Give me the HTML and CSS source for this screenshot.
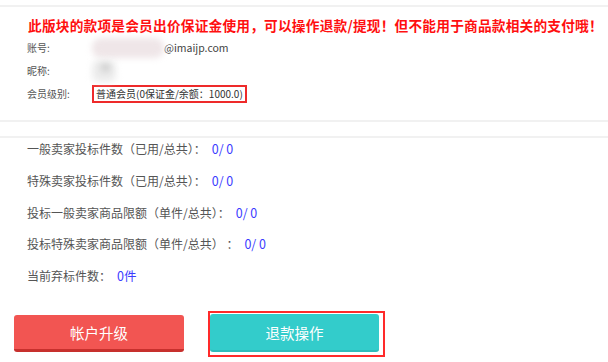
FILE: index.html
```html
<!DOCTYPE html>
<html lang="zh-CN">
<head>
<meta charset="utf-8">
<link rel="stylesheet" href="styles.css">
</head>
<body>
<div class="page">
  <div class="topline"></div>
  <p class="notice">此版块的款项是会员出价保证金使用，可以操作退款/提现！但不能用于商品款相关的支付哦！</p>
  <div class="info">
    <div class="info-row">
      <span class="label">账号:</span>
      <span class="value"><span class="blur blur-account"></span>@imaijp.com</span>
    </div>
    <div class="info-row">
      <span class="label">昵称:</span>
      <span class="value"><span class="blur blur-nick"><span class="blur-dark"></span></span></span>
    </div>
    <div class="info-row">
      <span class="label">会员级别:</span>
      <span class="value"><span class="level">普通会员(0保证金/余额：1000.0)</span></span>
    </div>
  </div>
  <div class="divider"></div>
  <div class="stats">
    <div class="stat">一般卖家投标件数（已用/总共）：<span class="num">0/ 0</span></div>
    <div class="stat">特殊卖家投标件数（已用/总共）：<span class="num">0/ 0</span></div>
    <div class="stat">投标一般卖家商品限额（单件/总共）：<span class="num">0/ 0</span></div>
    <div class="stat">投标特殊卖家商品限额（单件/总共） ：<span class="num">0/ 0</span></div>
    <div class="stat">当前弃标件数：<span class="num">0件</span></div>
  </div>
  <div class="actions">
    <button class="btn btn-red">帐户升级</button>
    <div class="highlight">
      <button class="btn btn-teal">退款操作</button>
    </div>
  </div>
</div>
</body>
</html>
```
FILE: styles.css
```css
html, body {
  margin: 0;
  padding: 0;
  background: #fff;
}
.page {
  width: 608px;
  height: 362px;
  overflow: hidden;
  font-family: "Noto Sans CJK SC", "Noto Sans", sans-serif;
  color: #555;
}
.topline {
  margin-top: 5px;
  height: 2px;
  background: #f1f1f1;
}
.notice {
  margin: 8px 0 0 28px;
  font-size: 13.7px;
  line-height: 20px;
  font-weight: 700;
  letter-spacing: 0.2px;
  color: #ff1010;
  white-space: nowrap;
}
.info {
  margin-top: 1px;
  padding-left: 27px;
  display: flex;
  flex-direction: column;
}
.info-row {
  display: flex;
  align-items: center;
  height: 23px;
  font-size: 10px;
}
.label {
  width: 65px;
  color: #555;
}
.value {
  display: flex;
  align-items: center;
  color: #444;
  font-size: 10.5px;
}
.blur {
  display: inline-block;
  filter: blur(3px);
}
.blur-account {
  width: 72px;
  height: 20px;
  background: #efe6e8;
  border-radius: 9px;
}
.blur-nick {
  width: 24px;
  height: 22px;
  background: #ececec;
  position: relative;
  border-radius: 7px;
}
.blur-dark {
  position: absolute;
  left: 9px;
  top: 3px;
  width: 9px;
  height: 9px;
  background: #d2d2d2;
}
.level {
  display: inline-block;
  border: 2px solid #ee2a2a;
  padding: 0 2px;
  height: 14px;
  line-height: 14px;
  font-size: 10px;
  color: #333;
  white-space: nowrap;
}
.divider {
  margin-top: 15px;
  height: 14px;
  border-top: 2px solid #f1f1f1;
  border-bottom: 2px solid #f1f1f1;
}
.stats {
  padding: 1px 0 0 27px;
  display: flex;
  flex-direction: column;
  gap: 11.75px;
}
.stat {
  height: 20px;
  line-height: 20px;
  font-size: 12px;
  color: #555;
  white-space: nowrap;
}
.num {
  color: #3c3cff;
  margin-left: 6px;
  font-size: 12.5px;
}
.actions {
  position: absolute;
  left: 14px;
  top: 311px;
  display: flex;
  align-items: flex-start;
  gap: 24px;
}
.btn {
  border: none;
  border-radius: 3px;
  color: #fff;
  font-family: "Noto Sans CJK SC", sans-serif;
  font-size: 14.5px;
  padding: 0;
  cursor: pointer;
}
.btn-red {
  margin-top: 4px;
  width: 170px;
  height: 37px;
  background: #f25552;
  border-bottom: 3px solid #c7302d;
}
.highlight {
  border: 2px solid #ff2a2a;
  padding: 1px 4px 3px 0;
}
.btn-teal {
  display: block;
  width: 169px;
  height: 38px;
  background: #33cccb;
  border-bottom: 2px solid #2fbcbb;
}
```
